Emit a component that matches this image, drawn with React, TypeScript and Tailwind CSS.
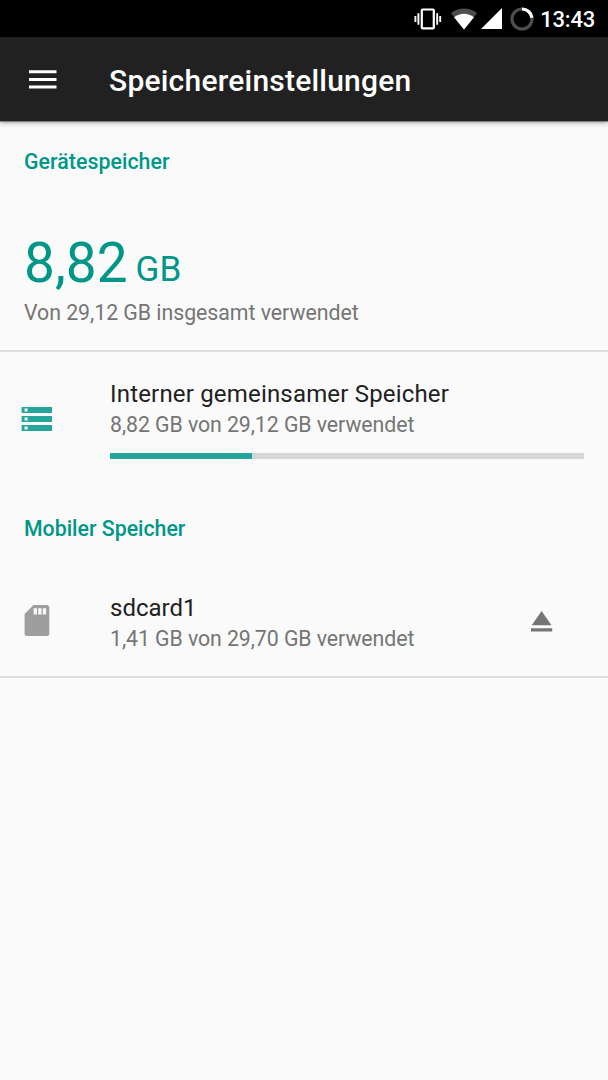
import React from 'react';

function StatusBar() {
  return (
    <div className="h-[37px] shrink-0 bg-black text-white flex items-center justify-end pr-[13px]">
      <svg className="w-[28px] h-[22px] mr-[9px]" viewBox="0 0 28 22" fill="none" stroke="#fff">
        <rect x="7.800" y="1.500" width="12" height="18.800" rx="0.800" strokeWidth="2.200" />
        <path strokeWidth="1.900" d="M1.400 8v6M4.400 5.300v11.500M23.200 5.300v11.500M26.200 8v6" />
      </svg>
      <svg className="w-[26px] h-[22px] mr-[4px]" viewBox="0 0 26 22">
        <path d="M0 5C7.500-1 18.500-1 26 5L13 21.500z" fill="#4d4d4d" />
        <path d="M3 9.200C9 4.500 17 4.500 23 9.200L13 21.500z" fill="#fff" />
      </svg>
      <svg className="w-[21px] h-[21px] mr-[8px]" viewBox="0 0 21 21"><path d="M0 21 21 0V21z" fill="#fff" /></svg>
      <svg className="w-[24px] h-[24px] mr-[6px]" viewBox="0 0 24 24" fill="none" strokeWidth="3.200">
        <circle cx="12" cy="12" r="10" stroke="#4d4d4d" />
        <path d="M12 2a10 10 0 0 1 9.900 8.700" stroke="#fff" />
      </svg>
      <span className="relative top-px text-[22px] leading-none font-medium tracking-[-0.2px]">13:43</span>
    </div>
  );
}

export default function App() {
  return (
    <div className="w-[608px] h-[1080px] bg-[#fafafa] font-[Roboto,sans-serif] flex flex-col overflow-hidden">
      <StatusBar />
      <header className="relative h-[84px] mb-px shrink-0 bg-[#212121] text-white flex items-center shadow-[0_1px_1px_rgba(0,0,0,0.35),0_2px_5px_rgba(0,0,0,0.3)]">
        <svg className="w-[28px] h-[19px] ml-[29px] mr-[52px]" viewBox="0 0 28 19" fill="currentColor">
          <path d="M0 .3h27.500v3H0zM0 7.900h27.500v3H0zM0 15.500h27.500v3H0z" />
        </svg>
        <h1 className="pt-[3px] text-[30px] leading-none font-medium tracking-[0.22px]">Speichereinstellungen</h1>
      </header>
      <section className="h-[230px] shrink-0 border-b-2 border-[#dedede] pl-[24px] pt-[28px]">
        <h2 className="text-[21.3px] leading-[24px] font-medium tracking-[0.06px] text-[#009688]">Gerätespeicher</h2>
        <div className="text-[#009688] mt-[57px] h-[64px] leading-[64px] flex items-baseline">
          <span className="text-[55px]">8,82</span><span className="text-[35px] ml-[8px] relative -top-px">GB</span>
        </div>
        <p className="text-[21.3px] leading-[26px] tracking-[-0.03px] text-[#757575] mt-[5px]">Von 29,12 GB insgesamt verwendet</p>
      </section>
      <section className="h-[138px] shrink-0 flex pt-[27px]">
        <svg className="w-[31px] h-[25px] ml-[21px] mr-[58px] mt-[28px]" viewBox="0 0 31 25">
          <path fill="#26a69a" d="M.6 0h30.400v6H.6zM.6 9h30.400v6H.6zM.6 18h30.400v6H.6z" />
          <path fill="#fafafa" d="M3.600 1.500h3v3h-3zM3.600 10.500h3v3h-3zM3.600 19.500h3v3h-3z" />
        </svg>
        <div className="w-[474px]">
          <p className="text-[24px] leading-[31px] tracking-[0.18px] text-[#212121]">Interner gemeinsamer Speicher</p>
          <p className="text-[21.3px] leading-[30px] tracking-[-0.07px] text-[#757575]">8,82 GB von 29,12 GB verwendet</p>
          <div className="mt-[13px] h-[6px] bg-[#d5d5d5]"><div className="h-full w-[30%] bg-[#26a69a]" /></div>
        </div>
      </section>
      <section className="h-[188px] shrink-0 border-b-2 border-[#dedede] pt-[27px]">
        <h2 className="ml-[24px] text-[21.3px] leading-[24px] font-medium text-[#009688]">Mobiler Speicher</h2>
        <div className="flex mt-[52px]">
          <svg className="w-[26px] h-[32px] ml-[24px] mr-[60px] mt-[12px]" viewBox="0 0 26 32">
            <path fill="#9e9e9e" d="M9.500 0h13q2.800 0 2.800 2.800v25.400q0 2.800-2.800 2.800H3.400q-2.800 0-2.800-2.800V9z" />
            <path fill="#fafafa" d="M9.600 3.200h3.300v6.300H9.600zM14.200 3.200h3.300v6.300h-3.300zM18.800 3.200h3.300v6.300h-3.300z" />
          </svg>
          <div className="w-[421px]">
            <p className="text-[24px] leading-[31px] text-[#212121]">sdcard1</p>
            <p className="text-[21.3px] leading-[30px] tracking-[-0.07px] text-[#757575]">1,41 GB von 29,70 GB verwendet</p>
          </div>
          <svg className="w-[22px] h-[22px] mt-[18px]" viewBox="0 0 22 22" fill="#757575"><path d="M10.600 0 20.500 14.300H.7zM0 17.300h21.200v3.200H0z" /></svg>
        </div>
      </section>
    </div>
  );
}
